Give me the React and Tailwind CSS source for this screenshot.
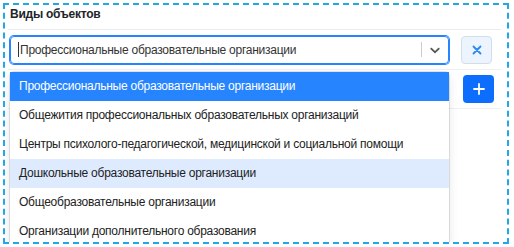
import React from 'react';

const options = [
  'Профессиональные образовательные организации',
  'Общежития профессиональных образовательных организаций',
  'Центры психолого-педагогической, медицинской и социальной помощи',
  'Дошкольные образовательные организации',
  'Общеобразовательные организации',
  'Организации дополнительного образования',
];

const Chevron = () => (
  <svg width="16" height="16" viewBox="0 0 20 20" fill="currentColor">
    <path d="M4.516 7.548c0.436-0.446 1.043-0.481 1.576 0l3.908 3.747 3.908-3.747c0.533-0.481 1.141-0.446 1.574 0 0.436 0.445 0.408 1.197 0 1.615-0.406 0.418-4.695 4.502-4.695 4.502-0.217 0.223-0.502 0.335-0.787 0.335s-0.57-0.112-0.789-0.335c0 0-4.287-4.084-4.695-4.502s-0.436-1.17 0-1.615z" />
  </svg>
);

const App = () => {
  return (
    <div className="w-[514px] h-[247px] bg-white pt-[3px] pl-[3px] font-['Liberation_Sans',Arial,sans-serif] tracking-[-0.25px] text-[#212529]">
      <div className="relative w-[506px] h-[241px] border-2 border-dashed border-[#22a8e6] overflow-hidden">
        <div className="ml-[3px] mr-[6px]">
          {/* header */}
          <div className="h-[25px] pl-[2px] pt-[2px] border-b border-[#e9ecef] text-[12px] font-bold leading-[15px]">
            Виды объектов
          </div>

          {/* select row */}
          <div className="flex items-center pl-[2px] pt-[5px] pb-[5px] h-[40px] border-b border-[#eef0f2]">
            <div className="relative w-[439px]">
              <div className="flex items-center h-[28px] rounded-[4px] border border-[#2684ff] shadow-[0_0_0_1px_#2684ff]">
                <div className="flex-1 flex items-center pl-[7px] text-[12px] text-[#333]">
                  <span className="w-px h-[15px] bg-[#333] mr-px" />
                  Профессиональные образовательные организации
                </div>
                <span className="w-px h-[15px] bg-[#ccc]" />
                <div className="w-[26px] flex justify-center text-[#555]">
                  <Chevron />
                </div>
              </div>

              {/* menu */}
              <div className="absolute left-0 top-full mt-[8px] w-[439px] bg-white rounded-[4px] shadow-[0_0_0_1px_rgba(0,0,0,0.1),0_4px_11px_rgba(0,0,0,0.1)] z-10">
                {options.map((o, i) => (
                  <div
                    key={o}
                    className={
                      'h-[29px] flex items-center pl-[9px] text-[12px] whitespace-nowrap ' +
                      (i === 0 ? 'bg-[#2684ff] text-white' : i === 3 ? 'bg-[#deebff] text-[#222]' : 'text-[#222]')
                    }
                  >
                    {o}
                  </div>
                ))}
              </div>
            </div>
            <button className="ml-[12px] w-[31px] h-[28px] flex items-center justify-center rounded-[4px] bg-[#ebf4ff] border border-[#d5dde6] text-[#2b88ee]">
              <svg width="10" height="10" viewBox="0 0 10 10" stroke="currentColor" strokeWidth="1.8" strokeLinecap="round">
                <path d="M1.5 1.5l7 7M8.5 1.5l-7 7" />
              </svg>
            </button>
          </div>

          {/* add row */}
          <div className="flex justify-end pr-[7px] pt-[5px] pb-[5px] border-b border-[#eef0f2]">
            <button className="w-[31px] h-[28px] flex items-center justify-center rounded-[4px] bg-[#0d6efd] text-white">
              <svg width="12" height="12" viewBox="0 0 12 12" stroke="currentColor" strokeWidth="1.8" strokeLinecap="round">
                <path d="M6 1v10M1 6h10" />
              </svg>
            </button>
          </div>
        </div>
      </div>
    </div>
  );
};

export default App;
